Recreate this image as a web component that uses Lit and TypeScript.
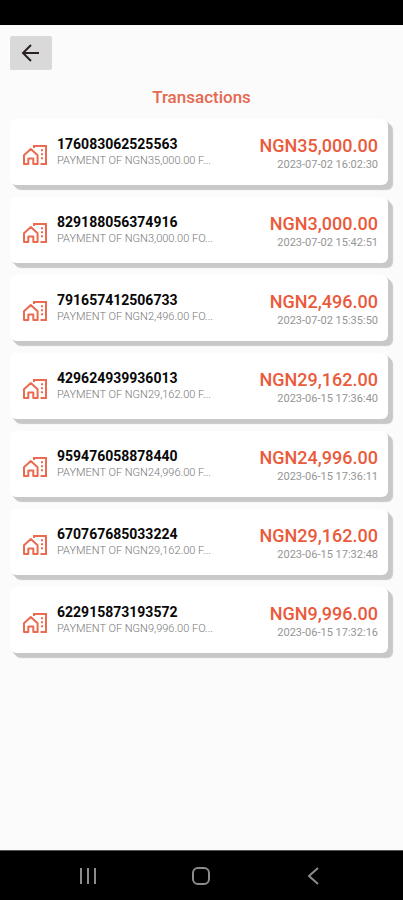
import { LitElement, html, css } from "lit";
import { customElement, property } from "lit/decorators.js";

interface Transaction {
  id: string;
  note: string;
  amount: string;
  date: string;
}

const transactions: Transaction[] = [
  { id: "176083062525563", note: "PAYMENT OF NGN35,000.00 F...", amount: "NGN35,000.00", date: "2023-07-02 16:02:30" },
  { id: "829188056374916", note: "PAYMENT OF NGN3,000.00 FO...", amount: "NGN3,000.00", date: "2023-07-02 15:42:51" },
  { id: "791657412506733", note: "PAYMENT OF NGN2,496.00 FO...", amount: "NGN2,496.00", date: "2023-07-02 15:35:50" },
  { id: "429624939936013", note: "PAYMENT OF NGN29,162.00 F...", amount: "NGN29,162.00", date: "2023-06-15 17:36:40" },
  { id: "959476058878440", note: "PAYMENT OF NGN24,996.00 F...", amount: "NGN24,996.00", date: "2023-06-15 17:36:11" },
  { id: "670767685033224", note: "PAYMENT OF NGN29,162.00 F...", amount: "NGN29,162.00", date: "2023-06-15 17:32:48" },
  { id: "622915873193572", note: "PAYMENT OF NGN9,996.00 FO...", amount: "NGN9,996.00", date: "2023-06-15 17:32:16" },
];

@customElement("transaction-card")
export class TransactionCard extends LitElement {
  @property({ attribute: false }) item!: Transaction;

  static styles = css`
    :host {
      display: block;
    }
    .card {
      display: flex;
      align-items: center;
      box-sizing: border-box;
      min-height: 66px;
      padding: 0 10px 0 13px;
      border-radius: 6px;
      background: #fff;
      box-shadow:
        1px 1px #c8c8c8,
        2px 2px #c8c8c8,
        3px 3px #c8c8c8,
        4px 4px #c8c8c8,
        5px 5px 1px #c8c8c8;
    }
    .icon {
      flex: none;
      width: 24px;
      height: 22px;
      margin: 6px 10px 0 0;
      color: #ea6b50;
    }
    .main {
      flex: 1;
      min-width: 0;
    }
    .side {
      padding-top: 4px;
      text-align: right;
    }
    .id,
    .note,
    .amount,
    .date {
      margin: 0;
      white-space: nowrap;
    }
    .id {
      font-size: 14px;
      font-weight: 700;
      line-height: 18px;
      color: #080808;
    }
    .note,
    .date {
      font-size: 11px;
      line-height: 16px;
    }
    .note {
      font-weight: 300;
      color: #777;
    }
    .amount {
      font-size: 18px;
      font-weight: 500;
      line-height: 22px;
      color: #ea5a3b;
    }
    .date {
      color: #959595;
    }
  `;

  render() {
    const { id, note, amount, date } = this.item;
    return html`
      <article class="card">
        <svg class="icon" viewBox="0 0 24 22" fill="none" stroke="currentColor" stroke-width="2" aria-hidden="true">
          <path d="M1 20V11.2L7.8 5L14.6 11.2V20H10.3V14.5H5.3V20Z" stroke-linejoin="round" />
          <path d="M11 4V2H23V20H17.5" />
          <path d="M18 6.2h2M18 10.2h2M18 14.2h2" />
        </svg>
        <div class="main">
          <p class="id">${id}</p>
          <p class="note">${note}</p>
        </div>
        <div class="side">
          <p class="amount">${amount}</p>
          <p class="date">${date}</p>
        </div>
      </article>
    `;
  }
}

@customElement("app-root")
export class AppRoot extends LitElement {
  static styles = css`
    :host {
      display: flex;
      flex-direction: column;
      min-height: 100vh;
      background: #fbfbfb;
      font-family: Roboto, "Liberation Sans", sans-serif;
    }
    .status {
      height: 25px;
      background: #000;
    }
    .content {
      flex: 1;
      padding: 11px 0 16px;
    }
    .back {
      display: flex;
      align-items: center;
      justify-content: center;
      width: 42px;
      height: 34px;
      margin: 0 10px;
      padding: 0;
      border: 0;
      border-radius: 2px;
      background: #d9d9d9;
      color: #2b2022;
    }
    .title {
      margin: 16px 0 11px;
      text-align: center;
      font-size: 17px;
      font-weight: 500;
      line-height: 22px;
      color: #e5694f;
    }
    .list {
      display: flex;
      flex-direction: column;
      gap: 12px;
      margin: 0;
      padding: 0 15px 0 10px;
      list-style: none;
    }
    .nav {
      display: flex;
      align-items: center;
      justify-content: space-between;
      box-sizing: border-box;
      height: 50px;
      padding: 0 78px 0 76px;
      background: #000;
      border-top: 1px solid #555;
    }
    .key {
      display: flex;
      padding: 0;
      border: 0;
      background: none;
      color: #8c8c8c;
    }
  `;

  render() {
    return html`
      <div class="status"></div>
      <main class="content">
        <button class="back" aria-label="Back">
          <svg width="20" height="20" viewBox="0 0 20 20" fill="none" stroke="currentColor" stroke-width="2">
            <path d="M10 2L2 10L10 18M2 10H18" />
          </svg>
        </button>
        <h1 class="title">Transactions</h1>
        <ul class="list">
          ${transactions.map((t) => html`<li><transaction-card .item=${t}></transaction-card></li>`)}
        </ul>
      </main>
      <nav class="nav">
        <button class="key" aria-label="Recent apps">
          <svg width="24" height="20" viewBox="0 0 24 20" fill="none" stroke="currentColor" stroke-width="2">
            <path d="M5 2V18M12 2V18M19 2V18" />
          </svg>
        </button>
        <button class="key" aria-label="Home">
          <svg width="24" height="20" viewBox="0 0 24 20" fill="none" stroke="currentColor" stroke-width="2">
            <rect x="4" y="2" width="16" height="16" rx="5" />
          </svg>
        </button>
        <button class="key" aria-label="Go back">
          <svg width="24" height="20" viewBox="0 0 24 20" fill="none" stroke="currentColor" stroke-width="2">
            <path d="M17 2L8 10L17 18" />
          </svg>
        </button>
      </nav>
    `;
  }
}
